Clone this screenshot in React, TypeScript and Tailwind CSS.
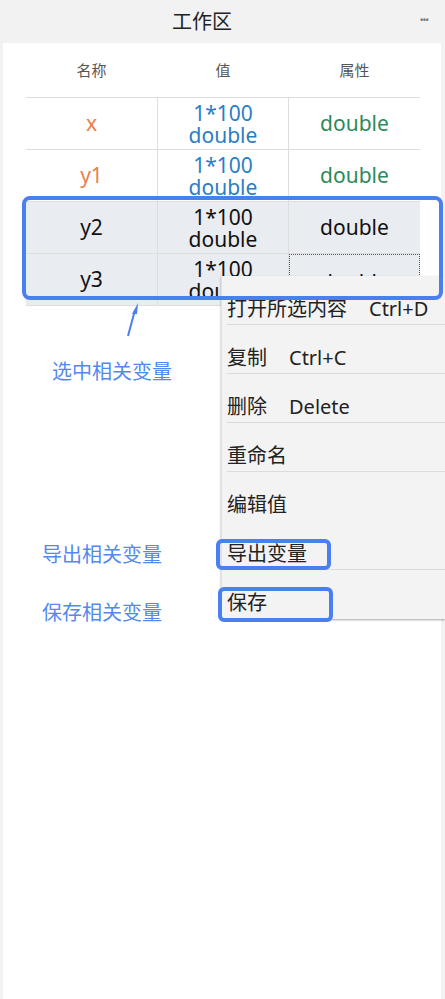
import React from 'react';

type Row = {
  name: string;
  selected: boolean;
};

const rows: Row[] = [
  { name: 'x', selected: false },
  { name: 'y1', selected: false },
  { name: 'y2', selected: true },
  { name: 'y3', selected: true },
];

const menuItems = [
  { label: '打开所选内容', key: 'Ctrl+D', line: true },
  { label: '复制', key: 'Ctrl+C', line: true },
  { label: '删除', key: 'Delete', line: true },
  { label: '重命名', key: '', line: true },
  { label: '编辑值', key: '', line: false },
  { label: '导出变量', key: '', line: true },
  { label: '保存', key: '', line: false },
];

export default function App() {
  return (
    <div className="relative w-[445px] h-[999px] bg-[#f2f2f2] overflow-hidden flex flex-col font-['Noto_Sans','Noto_Sans_CJK_SC',sans-serif]">
      {/* header */}
      <div className="h-[43px] shrink-0 flex items-center justify-between pl-[172px] pr-[17px]">
        <span className="text-[20px] text-[#222] leading-none">工作区</span>
        <span className="text-[10px] text-[#777] leading-none tracking-[-1px] -mt-[4px]">•••</span>
      </div>

      {/* panel */}
      <div className="flex-1 ml-[3px] mr-[4px] bg-white">
        <div className="ml-[23px] w-[394px]">
          <div className="h-[55px] grid grid-cols-[131px_132px_131px] items-center text-[15px] text-[#555] border-b border-[#dedede]">
            <span className="text-center">名称</span>
            <span className="text-center">值</span>
            <span className="text-center">属性</span>
          </div>
          {rows.map((r, i) => (
            <div
              key={r.name}
              className={`h-[52px] grid grid-cols-[131px_132px_131px] border-b border-[#dedede] text-[21px] ${
                r.selected ? 'bg-[#e9ecf1] text-[#111]' : ''
              }`}
            >
              <div className={`flex items-center justify-center ${r.selected ? '' : 'text-[#e8804f]'}`}>
                {r.name}
              </div>
              <div
                className={`flex flex-col items-center justify-center leading-[22px] border-l border-r border-[#dedede] ${
                  r.selected ? '' : 'text-[#2b7dc6]'
                }`}
              >
                <span>1*100</span>
                <span>double</span>
              </div>
              <div
                className={`flex items-center justify-center ${r.selected ? '' : 'text-[#2d8a5a]'} ${
                  i === 3 ? 'border border-dotted border-[#555] pt-[7px]' : ''
                }`}
              >
                double
              </div>
            </div>
          ))}
        </div>
      </div>

      {/* context menu */}
      <div className="absolute left-[221px] top-[276px] w-[224px] bg-[#f3f3f3] border-l border-[#e2e2e2] shadow-[0_1px_2px_rgba(0,0,0,0.35)] text-[20px] text-[#222]">
        {menuItems.map((m) => (
          <div key={m.label} className="h-[49px] pl-[5px]">
            <div className={`h-full pt-[19px] leading-[28px] flex ${m.line ? 'border-b border-[#dcdcdc]' : ''}`}>
              <span>{m.label}</span>
              {m.key && <span className="ml-[22px]">{m.key}</span>}
            </div>
          </div>
        ))}
      </div>

      {/* selection highlight */}
      <div className="absolute left-[22px] top-[196px] w-[421px] h-[104px] border-[4px] border-[#4a7ff0] rounded-[8px]" />
      <div className="absolute left-[216px] top-[539px] w-[115px] h-[31px] border-[4px] border-[#4a7ff0] rounded-[6px]" />
      <div className="absolute left-[218px] top-[587px] w-[115px] h-[35px] border-[4px] border-[#4a7ff0] rounded-[6px]" />

      {/* annotations */}
      <svg className="absolute left-[120px] top-[298px]" width="30" height="42" viewBox="0 0 30 42">
        <path d="M8 38 L15 12" stroke="#4a7ff0" strokeWidth="2" fill="none" />
        <path d="M18 5 L12 16 L17 16 Z" fill="#4a7ff0" />
      </svg>
      <span className="absolute left-[52px] top-[360px] text-[20px] leading-[24px] text-[#5389ee]">选中相关变量</span>
      <span className="absolute left-[42px] top-[543px] text-[20px] leading-[24px] text-[#5389ee]">导出相关变量</span>
      <span className="absolute left-[42px] top-[601px] text-[20px] leading-[24px] text-[#5389ee]">保存相关变量</span>
    </div>
  );
}
